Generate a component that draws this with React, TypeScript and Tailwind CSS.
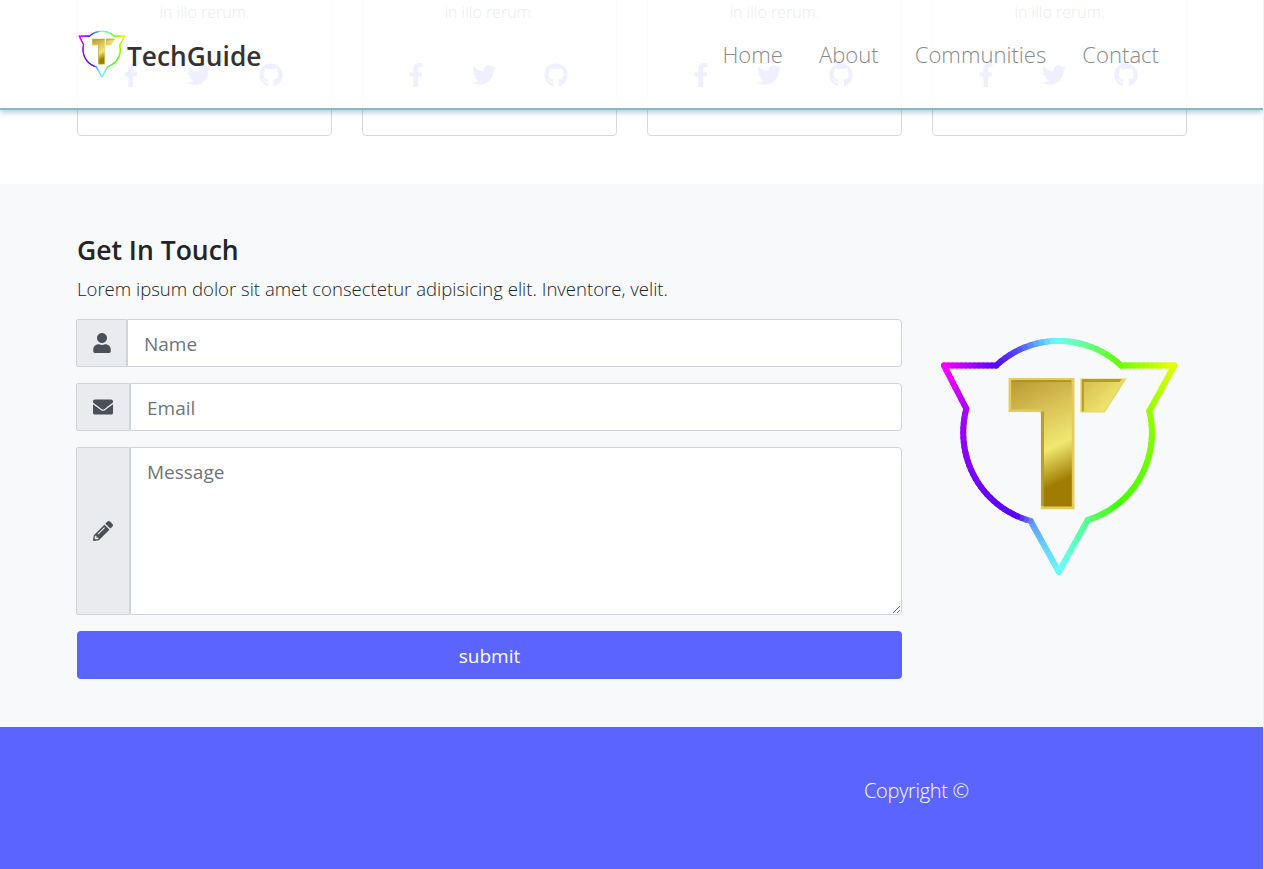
import React from "react";
import { FaFacebookF, FaTwitter, FaGithub, FaUser, FaEnvelope, FaPencilAlt } from "react-icons/fa";

type P = [number, number];
type Stop = [number, number[]];
const cx = 400, cy = 325;

const line = (a: P, b: P, n: number): P[] =>
  Array.from({ length: n + 1 }, (_, i) => [a[0] + ((b[0] - a[0]) * i) / n, a[1] + ((b[1] - a[1]) * i) / n] as P);

const polar = (p: P) => ({ r: Math.hypot(p[0] - cx, p[1] - cy), t: Math.atan2(p[1] - cy, p[0] - cx) });

// clockwise on screen (increasing angle) from a to b
const arc = (a: P, b: P, n: number): P[] => {
  const A = polar(a), B = polar(b);
  let end = B.t;
  while (end < A.t) end += Math.PI * 2;
  return Array.from({ length: n + 1 }, (_, i) => {
    const k = i / n;
    const t = A.t + (end - A.t) * k;
    const bulge = Math.sin(Math.PI * k) * 1.5;
    const r = A.r + (B.r - A.r) * k + bulge;
    return [cx + r * Math.cos(t), cy + r * Math.sin(t)] as P;
  });
};

const hex = (h: string) => [parseInt(h.slice(1, 3), 16), parseInt(h.slice(3, 5), 16), parseInt(h.slice(5, 7), 16)];
const mix = (stops: Stop[], k: number) => {
  for (let i = 1; i < stops.length; i++) {
    if (k <= stops[i][0]) {
      const [a, ca] = stops[i - 1];
      const [b, cb] = stops[i];
      const f = (k - a) / (b - a);
      return `rgb(${ca.map((c, j) => Math.round(c + (cb[j] - c) * f)).join(",")})`;
    }
  }
  const last = stops[stops.length - 1][1];
  return `rgb(${last.join(",")})`;
};
const s = (...items: [number, string][]): Stop[] => items.map(([o, c]) => [o, hex(c)]);

const tip: P = [403, 738];
const a1: P = [318, 585], a2: P = [125, 248], a3: P = [58, 118], a4: P = [215, 118];
const a5: P = [590, 118], a6: P = [750, 118], a7: P = [675, 255], a8: P = [490, 582];

const pieces: [P[], Stop[]][] = [
  [line(tip, a1, 14), s([0, "#66ffff"], [0.6, "#66ccff"], [1, "#6699ff"])],
  [arc(a1, a2, 30), s([0, "#6699ff"], [0.12, "#5500ff"], [0.4, "#6a00ff"], [1, "#a800ff"])],
  [line(a2, a3, 10), s([0, "#a800ff"], [1, "#ff00ff"])],
  [line(a3, a4, 12), s([0, "#ff00ff"], [1, "#6000ff"])],
  [arc(a4, a5, 24), s([0, "#5800ff"], [0.22, "#5050ff"], [0.5, "#66ffff"], [0.7, "#66ff99"], [1, "#66ff00"])],
  [line(a5, a6, 12), s([0, "#66ff00"], [1, "#e8ff00"])],
  [line(a6, a7, 10), s([0, "#e8ff00"], [1, "#99ff00"])],
  [arc(a7, a8, 30), s([0, "#99ff00"], [0.75, "#44ff00"], [1, "#55ff66"])],
  [line(a8, tip, 14), s([0, "#55ff88"], [1, "#66ffff"])],
];

function Logo({ className, id }: { className: string; id: string }) {
  return (
    <svg viewBox="40 30 730 720" className={className}>
      <defs>
        <linearGradient id={id} gradientUnits="userSpaceOnUse" x1="270" y1="160" x2="430" y2="500">
          <stop offset="0" stopColor="#b89a30" />
          <stop offset="0.35" stopColor="#dcc659" />
          <stop offset="0.62" stopColor="#f0e870" />
          <stop offset="0.9" stopColor="#a07c00" />
          <stop offset="1" stopColor="#a07c00" />
        </linearGradient>
        <linearGradient id={`${id}b`} gradientUnits="userSpaceOnUse" x1="470" y1="165" x2="550" y2="250">
          <stop offset="0" stopColor="#d4bb4c" />
          <stop offset="1" stopColor="#f0e870" />
        </linearGradient>
      </defs>
      {pieces.map(([points, stops], pi) =>
        points.slice(1).map((p, i) => (
          <line
            key={`${pi}-${i}`}
            x1={points[i][0]}
            y1={points[i][1]}
            x2={p[0]}
            y2={p[1]}
            stroke={mix(stops, (i + 0.5) / (points.length - 1))}
            strokeWidth="18"
            strokeLinecap="round"
          />
        ))
      )}
      <path d="M256 160H446V546H353V258L346 254H256Z" fill={`url(#${id})`} stroke="#e2cd5c" strokeWidth="8" />
      <path d="M261 162H440V168H261ZM350 256H358V540H350Z" fill="#a98d1c" opacity="0.8" />
      <path d="M470 160H602L540 257H470Z" fill={`url(#${id}b)`} stroke="#e8d766" strokeWidth="5" />
      <path d="M472 159H592L586 168H478V256H472Z" fill="#a98d1c" opacity="0.8" />
    </svg>
  );
}

function Card() {
  return (
    <div className="h-[300px] border border-[#d9d9d9] rounded-[4px] flex flex-col items-center justify-end pb-[48px]">
      <p className="text-[16px] font-light text-[#212529] leading-6">in illo rerum.</p>
      <div className="flex mt-[39px] mr-[7px] text-[24px] text-[#5c64ff]">
        <FaFacebookF className="mr-[44px]" />
        <FaTwitter className="mr-[48px]" />
        <FaGithub />
      </div>
    </div>
  );
}

function Addon({ children, w }: { children: React.ReactNode; w: string }) {
  return (
    <div className={`${w} -ml-px shrink-0 flex items-center justify-center bg-[#e9ebef] border border-[#ced4da] rounded-l-[2px] text-[#495057] text-[20px]`}>
      {children}
    </div>
  );
}

export default function App() {
  return (
    <div className="bg-[#f1f1f1] h-[869px] overflow-hidden">
      <div
        className="relative w-[1263px] h-[869px] overflow-hidden bg-white text-[#212529]"
        style={{ fontFamily: '"Open Sans", "Noto Sans", sans-serif' }}
      >
        <header className="absolute top-0 left-0 right-0 h-[110px] z-10 bg-white/90 border-b-2 border-[#8ab8c8] shadow-[0_2px_6px_rgba(60,130,150,0.45)] flex items-center pl-[78px] pr-[104px]">
          <Logo id="g1" className="w-[48px] h-[48px] -mt-[1px]" />
          <span className="ml-[1px] mt-[6px] text-[26.3px] font-semibold text-[#333333]">TechGuide</span>
          <nav className="ml-auto mt-[2px] flex gap-[36px] text-[22.1px] font-light text-[#8a8a8a]">
            <span>Home</span>
            <span>About</span>
            <span>Communities</span>
            <span>Contact</span>
          </nav>
        </header>

        <section className="h-[184px] overflow-hidden flex items-end pb-[48px] pl-[77px]">
          <div className="grid grid-cols-4 gap-[30px] w-[1110px] shrink-0">
            <Card />
            <Card />
            <Card />
            <Card />
          </div>
        </section>

        <section className="h-[543px] bg-[#f8f9fa] pt-[48px] pl-[77px] flex">
          <div className="w-[825px]">
            <h2 className="text-[26.5px] font-semibold leading-[36px] text-[#212529]">Get In Touch</h2>
            <p className="mt-[3px] text-[18.56px] font-light leading-[36px]">
              Lorem ipsum dolor sit amet consectetur adipisicing elit. Inventore, velit.
            </p>
            <div className="mt-[12px] flex flex-col gap-4">
              <div className="flex h-[48px]">
                <Addon w="w-[51px]"><FaUser /></Addon>
                <input
                  placeholder="Name"
                  className="flex-1 min-w-0 bg-white border border-[#ced4da] rounded-r-[4px] px-4 pt-[2px] text-[19px] placeholder:text-[#6c757d]"
                />
              </div>
              <div className="flex h-[48px]">
                <Addon w="w-[54px]"><FaEnvelope /></Addon>
                <input
                  placeholder="Email"
                  className="flex-1 min-w-0 bg-white border border-[#ced4da] rounded-r-[4px] px-4 pt-[2px] text-[19px] placeholder:text-[#6c757d]"
                />
              </div>
              <div className="flex h-[168px]">
                <Addon w="w-[54px]"><FaPencilAlt /></Addon>
                <textarea
                  placeholder="Message"
                  className="flex-1 min-w-0 bg-white border border-[#ced4da] rounded-r-[4px] px-4 py-[10px] text-[19px] placeholder:text-[#6c757d]"
                />
              </div>
              <button className="h-[48px] rounded-[4px] bg-[#5c64ff] pt-[2px] text-white text-[19px] font-normal">submit</button>
            </div>
          </div>
          <div className="ml-[36px] pt-[104px]">
            <Logo id="g2" className="w-[243px] h-[240px]" />
          </div>
        </section>

        <footer className="h-[142px] bg-[#5c64ff] text-white flex items-center pl-[864px] pb-[14px]">
          <span className="text-[20px] font-light tracking-[-0.3px]">Copyright ©</span>
        </footer>
      </div>
    </div>
  );
}
